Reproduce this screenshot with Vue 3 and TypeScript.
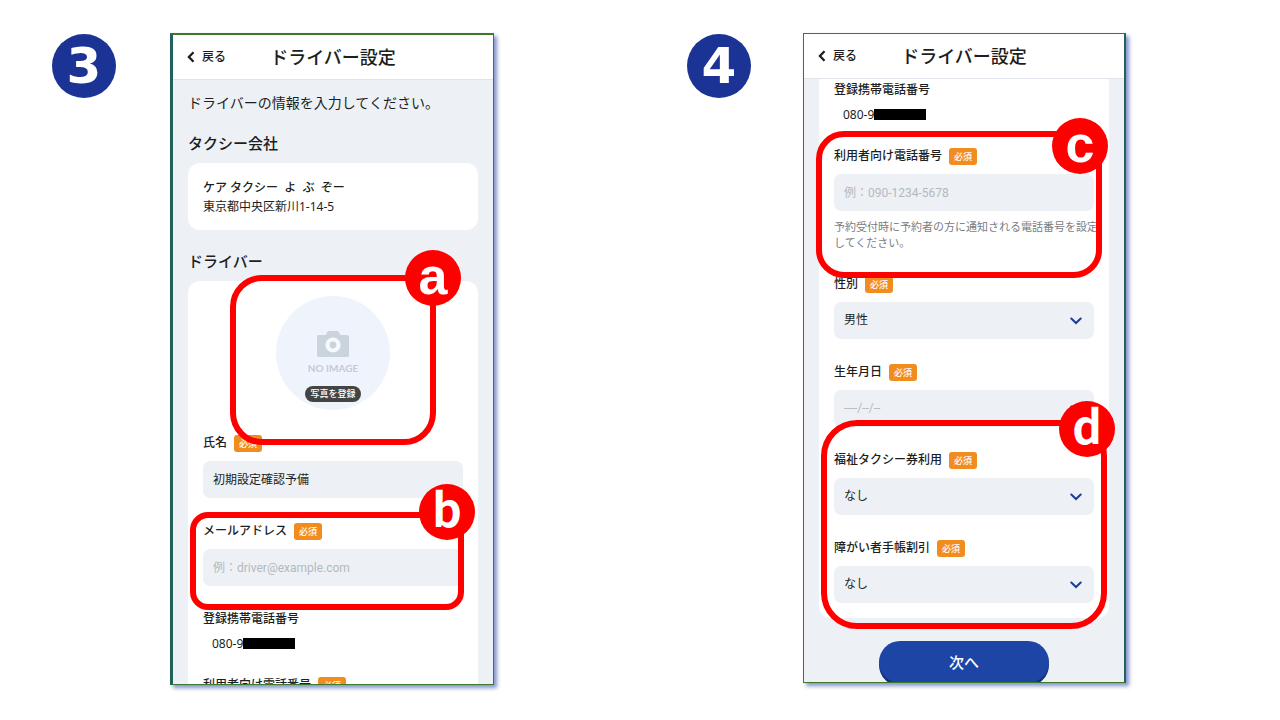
<script setup lang="ts">
interface Field {
  id: string
  label: string
  kind: 'text' | 'email' | 'tel' | 'phone' | 'select'
  required?: boolean
  value?: string
  placeholder?: string
  help?: string
}

const profileFields: Field[] = [
  { id: 'name', label: '氏名', kind: 'text', required: true, value: '初期設定確認予備' },
  { id: 'mail', label: 'メールアドレス', kind: 'email', required: true, placeholder: '例：driver@example.com' },
  { id: 'mobile', label: '登録携帯電話番号', kind: 'phone', value: '080-9' },
  { id: 'contact', label: '利用者向け電話番号', kind: 'tel', required: true, placeholder: '例：090-1234-5678' },
]

const detailFields: Field[] = [
  { id: 'mobile2', label: '登録携帯電話番号', kind: 'phone', value: '080-9' },
  {
    id: 'contact2',
    label: '利用者向け電話番号',
    kind: 'tel',
    required: true,
    placeholder: '例：090-1234-5678',
    help: '予約受付時に予約者の方に通知される電話番号を設定してください。',
  },
  { id: 'gender', label: '性別', kind: 'select', required: true, value: '男性' },
  { id: 'birth', label: '生年月日', kind: 'select', required: true, placeholder: '----/--/--' },
  { id: 'ticket', label: '福祉タクシー券利用', kind: 'select', required: true, value: 'なし' },
  { id: 'discount', label: '障がい者手帳割引', kind: 'select', required: true, value: 'なし' },
]

const screens = [
  { step: 3, name: 'first', fields: profileFields, marks: ['a', 'b'] },
  { step: 4, name: 'second', fields: detailFields, marks: ['c', 'd'] },
]
</script>

<template>
  <main class="guide">
    <section v-for="s in screens" :key="s.step" class="step" :class="s.name">
      <div class="number">{{ s.step }}</div>
      <div class="device">
        <div class="screen">
          <header class="bar">
            <button type="button" class="back">
              <svg width="8" height="12" viewBox="0 0 8 12" aria-hidden="true">
                <path d="M6.5 1.2 1.9 6l4.6 4.8" fill="none" stroke="currentColor" stroke-width="2.300" />
              </svg>
              戻る
            </button>
            <h1>ドライバー設定</h1>
          </header>

          <div class="content">
            <template v-if="s.name === 'first'">
              <p class="intro">ドライバーの情報を入力してください。</p>
              <h2>タクシー会社</h2>
              <div class="card company">
                <strong>ケア タクシー&nbsp; よ&nbsp; ぶ&nbsp; ぞー</strong>
                <span>東京都中央区新川1-14-5</span>
              </div>
              <h2>ドライバー</h2>
            </template>

            <form class="card form" @submit.prevent>
              <div v-if="s.name === 'first'" class="photo">
                <svg width="32" height="26" viewBox="0 0 32 26" aria-hidden="true">
                  <path d="M1.500 4H8.500l1.800-3q.6-1 1.700-1h8q1.100 0 1.700 1l1.800 3H30.500q1.500 0 1.500 1.500v19q0 1.500-1.500 1.500H1.500q-1.500 0-1.500-1.500v-19Q0 4 1.500 4Z" fill="#c9d4dd" />
                  <circle cx="16" cy="14" r="5.500" fill="none" stroke="#f6f9fd" stroke-width="4.200" />
                </svg>
                <span class="no-image">NO IMAGE</span>
                <button type="button" class="register">写真を登録</button>
              </div>

              <div v-for="f in s.fields" :key="f.id" class="field" :class="f.kind">
                <div class="label-row">
                  <label :for="f.id">{{ f.label }}</label>
                  <span v-if="f.required" class="required">必須</span>
                </div>
                <output v-if="f.kind === 'phone'" :id="f.id" class="phone-value">{{ f.value }}<span class="masked"></span></output>
                <div v-else-if="f.kind === 'select'" class="select-box">
                  <select :id="f.id" :class="{ empty: !f.value }">
                    <option>{{ f.value || f.placeholder }}</option>
                  </select>
                  <svg class="chevron" width="12" height="8" viewBox="0 0 12 8" aria-hidden="true">
                    <path d="m1.300 1.500 4.700 4.500 4.700-4.500" fill="none" stroke="currentColor" stroke-width="2" stroke-linecap="round" />
                  </svg>
                </div>
                <input v-else :id="f.id" :type="f.kind" :value="f.value" :placeholder="f.placeholder" />
                <p v-if="f.help" class="help">{{ f.help }}</p>
              </div>
            </form>

            <button v-if="s.name === 'second'" type="button" class="next">次へ</button>
          </div>
        </div>

        <template v-for="m in s.marks" :key="m">
          <div class="frame" :class="'frame-' + m"></div>
          <div class="mark" :class="'mark-' + m">{{ m }}</div>
        </template>
      </div>
    </section>
  </main>
</template>

<style>
body {
  margin: 0;
  background: #fff;
}
</style>

<style scoped>
* {
  box-sizing: border-box;
}

.guide {
  display: grid;
  grid-template-columns: 1fr 1fr;
  padding: 33px 14px 20px 0;
  color: #1c1e22;
  font-family: "Noto Sans", "Noto Sans CJK JP", sans-serif;
  font-size: 12px;
}

button,
input,
select {
  border: 0;
  margin: 0;
  color: inherit;
  font: inherit;
}

.step {
  display: flex;
  align-items: flex-start;
  gap: 54px;
  padding-left: 52px;
}

.step.second {
  gap: 52px;
  padding-left: 54px;
}

.number {
  flex: none;
  display: grid;
  place-items: center;
  width: 64px;
  height: 64px;
  margin-top: 1px;
  border-radius: 50%;
  background: #1b3394;
  color: #fff;
  font: bold 50px/64px "DejaVu Sans", sans-serif;
}

.device {
  position: relative;
  flex: 0 1 324px;
}

.second .device {
  flex-basis: 323px;
}

.screen {
  height: 652px;
  overflow: hidden;
  border: 1px solid #3c7a28;
  background: #edf1f6;
  box-shadow: 3px 3px 4px #8494cc;
}

.first .screen {
  border-top-width: 2px;
  border-left: 3px solid #23625c;
}

.second .screen {
  height: 650px;
  border-right: 2px solid #23625c;
}

.bar {
  display: grid;
  grid-template-columns: 1fr auto 1fr;
  align-items: center;
  height: 45px;
  padding: 0 14px;
  background: #fff;
  border-bottom: 1px solid #e0e4ea;
}

.back {
  display: flex;
  align-items: center;
  gap: 7px;
  padding: 0;
  background: none;
  font-weight: 500;
  line-height: 20px;
}

h1 {
  margin: 0;
  font-size: 18px;
  font-weight: 500;
  line-height: 26px;
}

.content {
  padding: 0 15px;
}

.intro {
  margin: 0 0 18px;
  padding-top: 12px;
  font-size: 14px;
  line-height: 22px;
}

h2 {
  margin: 0 0 9px;
  font-size: 15px;
  font-weight: 500;
  line-height: 22px;
}

.card {
  padding: 15px;
  border-radius: 12px;
  background: #fff;
}

.company {
  display: flex;
  flex-direction: column;
  margin-bottom: 20px;
  padding-bottom: 14px;
  line-height: 19px;
}

.company strong {
  font-weight: 500;
}

.second .form {
  padding-top: 2px;
  border-radius: 0 0 12px 12px;
}

.photo {
  display: flex;
  flex-direction: column;
  align-items: center;
  width: 114px;
  height: 114px;
  margin: 0 auto 24px;
  padding-top: 35px;
  border-radius: 50%;
  background: #eff4fc;
}

.no-image {
  margin: 5px 0 12px;
  color: #c3cbd6;
  font: bold 10px/12px Lato, sans-serif;
}

.register {
  height: 16px;
  padding: 0 5px;
  border-radius: 8px;
  background: #444;
  color: #fff;
  font-size: 9px;
  font-weight: 500;
  line-height: 16px;
}

.field {
  margin-bottom: 24px;
}

.field:last-child {
  margin-bottom: 0;
}

.field.phone {
  margin-bottom: 18px;
}

.label-row {
  display: flex;
  align-items: center;
  gap: 7px;
  height: 18px;
  margin-bottom: 9px;
  font-weight: 500;
  line-height: 18px;
}

.phone .label-row {
  margin-bottom: 0;
}

.required {
  padding: 0 5px;
  border-radius: 3px;
  background: #f18d1f;
  color: #fff;
  font-size: 9px;
  line-height: 17px;
}

input,
select {
  display: block;
  width: 100%;
  height: 37px;
  padding: 0 10px 2px;
  border-radius: 7px;
  background: #edf1f6;
  appearance: none;
}

input::placeholder {
  color: #b4b8bf;
  font-family: Roboto, "Noto Sans CJK JP", sans-serif;
  opacity: 1;
}

input:placeholder-shown {
  padding-bottom: 0;
}

.empty {
  color: #b4b8bf;
  font-family: Roboto, sans-serif;
}

.select-box {
  position: relative;
}

.chevron {
  position: absolute;
  top: 15px;
  right: 12px;
  color: #1a3d98;
}

.phone-value {
  display: flex;
  align-items: center;
  height: 30px;
  padding-left: 9px;
}

.masked {
  width: 52px;
  height: 11px;
  background: #000;
}

.help {
  margin: 8px -6px 0 0;
  color: #7b7d82;
  font-size: 11px;
  line-height: 16px;
}

.next {
  display: block;
  width: 170px;
  height: 42px;
  margin: 23px auto 0;
  padding: 0 0 2px;
  border-radius: 21px;
  background: #1c45a6;
  box-shadow: 0 3px #15307a;
  color: #fff;
  font-size: 15px;
  font-weight: 500;
}

.frame {
  position: absolute;
  border: 6px solid #f00;
  pointer-events: none;
}

.mark {
  position: absolute;
  width: 56px;
  height: 56px;
  border-radius: 50%;
  background: #f00;
  color: #fff;
  font: bold 52px/52px "Liberation Sans", sans-serif;
  text-align: center;
}

.frame-a {
  top: 242px;
  left: 60px;
  width: 206px;
  height: 170px;
  border-radius: 32px;
}

.mark-a {
  top: 217px;
  left: 235px;
}

.frame-b {
  top: 479px;
  left: 20px;
  width: 274px;
  height: 98px;
  border-radius: 18px;
}

.mark-b {
  top: 451px;
  left: 249px;
}

.frame-c {
  top: 98px;
  left: 13px;
  width: 286px;
  height: 147px;
  border-radius: 28px;
}

.mark-c {
  top: 85px;
  left: 249px;
}

.frame-d {
  top: 387px;
  left: 18px;
  width: 286px;
  height: 209px;
  border-radius: 36px;
}

.mark-d {
  top: 368px;
  left: 256px;
}

.mark-b,
.mark-d {
  font-family: "Noto Sans CJK JP", sans-serif;
  font-size: 46px;
  line-height: 46px;
}
</style>
